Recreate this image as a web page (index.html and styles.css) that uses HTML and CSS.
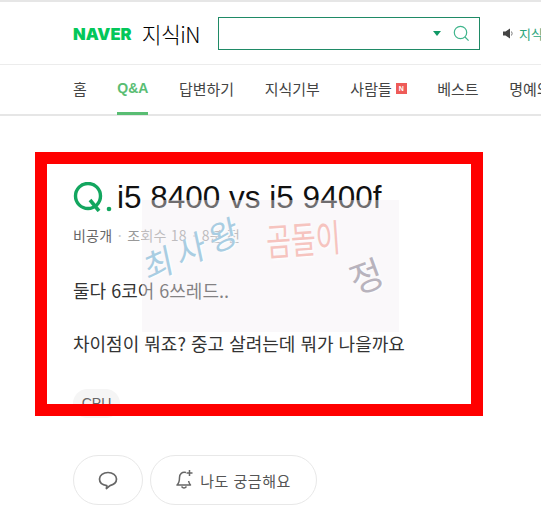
FILE: index.html
```html
<!DOCTYPE html>
<html lang="ko">
<head>
<meta charset="utf-8">
<title>지식iN</title>
<link rel="stylesheet" href="styles.css">
</head>
<body>
<div class="page">
  <header class="header">
    <div class="brand"><span class="naver">NAVER</span><span class="jisik">지식iN</span></div>
    <div class="search">
      <span class="caret"></span>
      <svg class="glass" width="17" height="17" viewBox="0 0 17 17" fill="none"><circle cx="7.5" cy="7.5" r="6.2" stroke="#3fb58c" stroke-width="1.2"/><path d="M12 12l3.6 3.6" stroke="#3fb58c" stroke-width="1.2"/></svg>
    </div>
    <div class="notice">
      <svg width="11" height="11" viewBox="0 0 11 11"><path d="M0 3.5h2.5L7 .5v10L2.5 7.5H0z" fill="#444"/><path d="M8.500 3.500q1.300 2 0 4" stroke="#777" fill="none"/></svg>
      <span>지식iN 공지</span>
    </div>
  </header>
  <nav class="nav">
    <a class="nav-item">홈</a>
    <a class="nav-item active">Q&amp;A</a>
    <a class="nav-item">답변하기</a>
    <a class="nav-item">지식기부</a>
    <a class="nav-item">사람들<span class="new">N</span></a>
    <a class="nav-item">베스트</a>
    <a class="nav-item">명예의전당</a>
  </nav>
  <main class="main">
    <h1 class="title">
      <svg class="q" width="39" height="30" viewBox="0 0 39 30" fill="none"><circle cx="15" cy="14" r="12.500" stroke="#13a65f" stroke-width="3.400"/><path d="M17 18l9 11" stroke="#13a65f" stroke-width="3.600"/><circle cx="36" cy="27" r="2.300" fill="#13a65f"/></svg>
      <span>i5 8400 vs i5 9400f</span>
    </h1>
    <div class="meta"><span class="author">비공개</span><span class="dot">·</span><span>조회수 18</span><span class="dot">·</span><span>8분 전</span></div>
    <p class="body-line first">둘다 6코어 6쓰레드..</p>
    <p class="body-line second">차이점이 뭐죠? 중고 살려는데 뭐가 나을까요</p>
    <span class="chip">CPU</span>
    <div class="actions">
      <button class="pill comment">
        <svg width="20" height="19" viewBox="0 0 20 19" fill="none"><path d="M10 1.500c4.700 0 8.500 2.900 8.500 6.600 0 3.500-3 5.700-6.500 6.500l-3.600 2.900.4-2.900C4.500 14.200 1.500 11.800 1.500 8.100 1.500 4.400 5.300 1.500 10 1.500z" stroke="#666" stroke-width="1.700" stroke-linejoin="round"/></svg>
      </button>
      <button class="pill wonder">
        <svg width="17" height="20" viewBox="0 0 17 20" fill="none"><path d="M10 2.500C6 1.500 3.500 4 3.500 7.500c0 4-.6 6-2.500 7.500h13.500c-1-1-1.600-2.200-1.900-4" stroke="#666" stroke-width="1.500" stroke-linejoin="round"/><path d="M5.500 16.500q2.500 3 5 0" stroke="#666" stroke-width="1.500"/><path d="M13.500 0v6M10.500 3h6" stroke="#666" stroke-width="1.500"/></svg>
        <span>나도 궁금해요</span>
      </button>
    </div>
  </main>
  <div class="watermark">
    <span class="wm wm-a">최사왕</span>
    <span class="wm wm-b">곰돌이</span>
    <span class="wm wm-c">정</span>
  </div>
  <div class="frame"></div>
</div>
</body>
</html>
```
FILE: styles.css
```css
* { box-sizing: border-box; }
html, body { margin: 0; padding: 0; background: #fff; }
body { font-family: "Liberation Sans", "Noto Sans CJK KR", sans-serif; color: #333; }
.page { position: relative; width: 541px; height: 531px; overflow: hidden; border-top: 2px solid #e6e6e6; }
.header { height: 63px; display: flex; align-items: center; padding: 1px 0 0 73px; border-bottom: 1px solid #ececec; white-space: nowrap; }
.brand { display: flex; align-items: center; gap: 10px; width: 145px; flex: none; }
.naver { font-family: Inter, sans-serif; font-weight: 900; font-size: 16.500px; color: #03c75a; }
.jisik { font-family: "Noto Sans CJK KR", sans-serif; font-weight: 300; font-size: 21.500px; color: #000; letter-spacing: -.5px; }
.search { flex: none; width: 262px; height: 33px; border: 1px solid #1f8a66; display: flex; align-items: center; justify-content: flex-end; padding-right: 9px; gap: 12px; }
.caret { width: 0; height: 0; border-left: 4px solid transparent; border-right: 4px solid transparent; border-top: 5px solid #119966; }
.notice { flex: none; margin-left: 23px; display: flex; align-items: center; gap: 5px; font-family: "Noto Sans CJK KR", sans-serif; font-size: 13px; color: #2aa57c; }
.nav { height: 51px; display: flex; align-items: stretch; gap: 30.500px; padding-left: 73px; border-bottom: 2px solid #e6e6e6; white-space: nowrap; }
.nav-item { display: flex; align-items: center; position: relative; height: 50px; padding-bottom: 4px; font-family: "Noto Sans CJK KR", sans-serif; font-size: 15px; color: #444; flex: none; }
.nav-item.active { font-family: "Liberation Sans", sans-serif; font-weight: 700; color: #59bd73; font-size: 14px; border-bottom: 3px solid #59bd73; padding-bottom: 1px; }
.new { width: 11px; height: 11px; margin-left: 4px; background: #ee5b58; color: #fff; font: 700 7px/11px "Liberation Sans", sans-serif; text-align: center; }
.main { padding: 63px 0 0 73px; }
.title { margin: 0; display: flex; align-items: center; gap: 5px; height: 36px; font-weight: 400; font-size: 31.500px; color: #111; }
.q { flex: none; }
.meta { margin-top: 10px; display: flex; align-items: center; height: 20px; font-family: "Noto Sans CJK KR", sans-serif; font-size: 14px; letter-spacing: .2px; color: #999; }
.author { color: #666; }
.dot { margin: 0 5.500px; color: #ccc; }
.body-line { margin: 0; font-family: "Noto Sans CJK KR", sans-serif; font-size: 18px; line-height: 24px; color: #333; }
.first { margin-top: 33px; }
.second { margin-top: 29px; }
.chip { display: block; width: 47px; height: 29px; margin-top: 34px; border-radius: 15px; background: #f5f5f5; font-size: 14px; line-height: 29px; text-align: center; color: #666; }
.actions { display: flex; gap: 7px; margin-top: 37px; }
.pill { height: 50px; border: 1px solid #e8e8e8; border-radius: 25px; background: #fff; display: flex; align-items: center; justify-content: center; padding: 0; font-family: "Noto Sans CJK KR", sans-serif; font-size: 15px; letter-spacing: .5px; color: #555; gap: 7px; }
.comment { width: 70px; }
.wonder { width: 167px; }
.watermark { position: absolute; left: 142px; top: 198px; width: 257px; height: 132px; background: rgba(243, 238, 243, .42); }
.wm { position: absolute; font-family: "Noto Sans CJK KR", sans-serif; font-weight: 400; text-shadow: 1px 1px 2px #fff; }
.wm-a { left: -2px; top: 23px; font-size: 33px; letter-spacing: 5px; color: #a9cde2; transform: rotate(-24deg) skewX(-12deg); }
.wm-b { left: 124px; top: 18px; font-size: 27px; color: #f6c4bf; transform: rotate(-4deg) scaleY(1.4); }
.wm-c { left: 207px; top: 48px; font-size: 36px; color: #b8b3bd; transform: rotate(-20deg); }
.frame { position: absolute; left: 35px; top: 150px; width: 448px; height: 264px; border: 12px solid #f00; }
```
